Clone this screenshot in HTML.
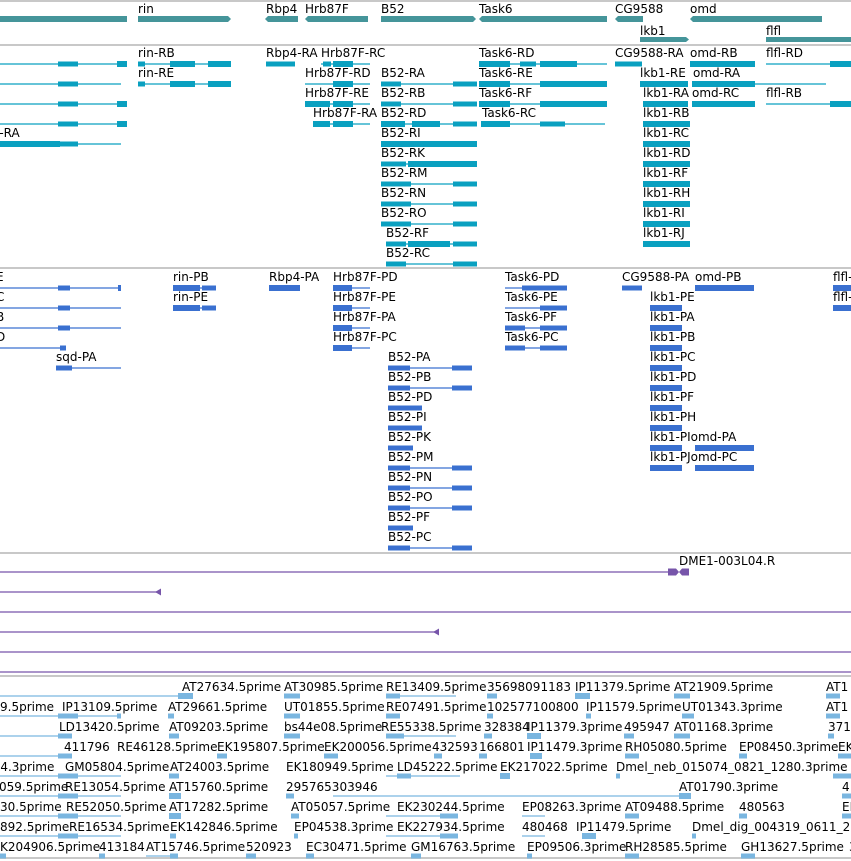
<!DOCTYPE html>
<html><head><meta charset="utf-8"><style>
html,body{margin:0;padding:0;background:#fff;width:851px;height:861px;overflow:hidden}
svg{display:block}
text{font-family:"DejaVu Sans","Liberation Sans",sans-serif;font-size:12px;fill:#000}
</style></head><body>
<svg width="851" height="861" viewBox="0 0 851 861" xmlns="http://www.w3.org/2000/svg">
<g stroke="#c8c8c8" stroke-width="2">
<path d="M0 1H851M0 45H851M0 268H851M0 553H851M0 676H851M0 858H851"/>
</g>
<!-- genes -->
<g fill="#45959a">
<rect x="0" y="16" width="127" height="6"/><rect x="138" y="16" width="90" height="6"/><polygon points="228,16 231,19 228,22"/>
<rect x="268" y="16" width="30" height="6"/><polygon points="268,16 265,19 268,22"/>
<rect x="308" y="16" width="60" height="6"/><polygon points="308,16 305,19 308,22"/>
<rect x="381" y="16" width="92" height="6"/><polygon points="473,16 476,19 473,22"/>
<rect x="482" y="16" width="125" height="6"/><polygon points="482,16 479,19 482,22"/>
<rect x="618" y="16" width="25" height="6"/><polygon points="618,16 615,19 618,22"/>
<rect x="693" y="16" width="129" height="6"/><polygon points="693,16 690,19 693,22"/>
<rect x="640" y="37" width="46" height="5"/><polygon points="686,37 689,39.5 686,42"/>
<rect x="766" y="37" width="85" height="5"/>
</g>
<text x="138" y="13">rin</text><text x="266" y="13">Rbp4</text><text x="305" y="13">Hrb87F</text><text x="381" y="13">B52</text><text x="479" y="13">Task6</text><text x="615" y="13">CG9588</text><text x="690" y="13">omd</text>
<text x="640" y="35">lkb1</text><text x="766" y="35">flfl</text>

<!-- section 1 -->
<g stroke="#0aa0c0" stroke-width="1.3" fill="none">
<path d="M0 64H127M138 64H231M266 64H295M321 64H370M479 64H607M615 64H642M690 64H755M766 64H851"/>
<path d="M0 84H121M138 84H231M305 84H370M381 84H477M479 84H607M640 84H688M692 84H826"/>
<path d="M0 104H127M305 104H370M381 104H477M479 104H607M643 104H688M692 104H755M766 104H851"/>
<path d="M0 124H127M313 124H370M381 124H477M481 124H605M643 124H690"/>
<path d="M0 144H121M381 144H477M643 144H690"/>
<path d="M381 164H477M643 164H690M381 184H477M643 184H690M381 204H477M643 204H690M381 224H477M643 224H690M386 244H477M643 244H690M386 264H477"/>
</g>
<g fill="#0aa0c0">
<rect x="58" y="61.5" width="20" height="5"/><rect x="117" y="61" width="10" height="6"/><rect x="170" y="61" width="25" height="6"/><rect x="208" y="61" width="23" height="6"/><rect x="138" y="61.5" width="7" height="5"/>
<rect x="266" y="61.5" width="29" height="5"/><rect x="333" y="61" width="20" height="6"/><rect x="323" y="61.5" width="8" height="5"/><rect x="479" y="61" width="31" height="6"/><rect x="540" y="61" width="37" height="6"/><rect x="520" y="61.5" width="16" height="5"/><rect x="615" y="61.5" width="27" height="5"/><rect x="690" y="61" width="65" height="6"/><rect x="830" y="61" width="21" height="6"/>
<rect x="58" y="81.5" width="20" height="5"/><rect x="170" y="81" width="25" height="6"/><rect x="208" y="81" width="23" height="6"/><rect x="138" y="81.5" width="7" height="5"/><rect x="333" y="81" width="20" height="6"/><rect x="381" y="81.5" width="20" height="5"/><rect x="453" y="81.5" width="24" height="5"/><rect x="479" y="81" width="31" height="6"/><rect x="540" y="81" width="67" height="6"/><rect x="640" y="81" width="48" height="6"/><rect x="692" y="81" width="63" height="6"/>
<rect x="58" y="101.5" width="20" height="5"/><rect x="117" y="101" width="10" height="6"/><rect x="305" y="101" width="25" height="6"/><rect x="333" y="101" width="20" height="6"/><rect x="381" y="101.5" width="20" height="5"/><rect x="453" y="101.5" width="24" height="5"/><rect x="479" y="101" width="31" height="6"/><rect x="540" y="101" width="67" height="6"/><rect x="643" y="101" width="45" height="6"/><rect x="692" y="101" width="63" height="6"/><rect x="830" y="101" width="21" height="6"/>
<rect x="58" y="121.5" width="20" height="5"/><rect x="117" y="121" width="10" height="6"/><rect x="313" y="121" width="17" height="6"/><rect x="333" y="121" width="20" height="6"/><rect x="381" y="121" width="24" height="6"/><rect x="412" y="121" width="28" height="6"/><rect x="453" y="121.5" width="24" height="5"/><rect x="481" y="121" width="29" height="6"/><rect x="540" y="121.5" width="25" height="5"/><rect x="643" y="121" width="47" height="6"/>
<rect x="0" y="141" width="60" height="6"/><rect x="60" y="141.5" width="18" height="5"/><rect x="381" y="141" width="96" height="6"/><rect x="643" y="141" width="47" height="6"/>
<rect x="381" y="161.5" width="25" height="5"/><rect x="408" y="161" width="69" height="6"/><rect x="643" y="161" width="47" height="6"/>
<rect x="381" y="181.5" width="30" height="5"/><rect x="453" y="181.5" width="24" height="5"/><rect x="643" y="181" width="47" height="6"/>
<rect x="381" y="201.5" width="30" height="5"/><rect x="453" y="201.5" width="24" height="5"/><rect x="643" y="201" width="47" height="6"/>
<rect x="381" y="221.5" width="30" height="5"/><rect x="453" y="221.5" width="24" height="5"/><rect x="643" y="221" width="47" height="6"/>
<rect x="386" y="241.5" width="20" height="5"/><rect x="408" y="241" width="42" height="6"/><rect x="453" y="241.5" width="24" height="5"/><rect x="643" y="241" width="47" height="6"/>
<rect x="386" y="261.5" width="20" height="5"/><rect x="453" y="261.5" width="24" height="5"/>
</g>
<text x="138" y="57">rin-RB</text><text x="266" y="57">Rbp4-RA</text><text x="321" y="57">Hrb87F-RC</text><text x="479" y="57">Task6-RD</text><text x="615" y="57">CG9588-RA</text><text x="690" y="57">omd-RB</text><text x="766" y="57">flfl-RD</text>
<text x="138" y="77">rin-RE</text><text x="305" y="77">Hrb87F-RD</text><text x="381" y="77">B52-RA</text><text x="479" y="77">Task6-RE</text><text x="640" y="77">lkb1-RE</text><text x="693" y="77">omd-RA</text>
<text x="305" y="97">Hrb87F-RE</text><text x="381" y="97">B52-RB</text><text x="479" y="97">Task6-RF</text><text x="643" y="97">lkb1-RA</text><text x="692" y="97">omd-RC</text><text x="766" y="97">flfl-RB</text>
<text x="313" y="117">Hrb87F-RA</text><text x="381" y="117">B52-RD</text><text x="482" y="117">Task6-RC</text><text x="643" y="117">lkb1-RB</text>
<text x="-4" y="137">l-RA</text><text x="381" y="137">B52-RI</text><text x="643" y="137">lkb1-RC</text>
<text x="381" y="157">B52-RK</text><text x="643" y="157">lkb1-RD</text>
<text x="381" y="177">B52-RM</text><text x="643" y="177">lkb1-RF</text>
<text x="381" y="197">B52-RN</text><text x="643" y="197">lkb1-RH</text>
<text x="381" y="217">B52-RO</text><text x="643" y="217">lkb1-RI</text>
<text x="386" y="237">B52-RF</text><text x="643" y="237">lkb1-RJ</text>
<text x="386" y="257">B52-RC</text>

<!-- section 2 -->
<g stroke="#3a70d0" stroke-width="1.3" fill="none">
<path d="M0 288H121M173 288H216M269 288H300M333 288H370M505 288H567M622 288H642M695 288H754M833 288H851"/>
<path d="M0 308H121M173 308H216M333 308H370M505 308H567M650 308H682M833 308H851"/>
<path d="M0 328H121M333 328H370M505 328H567M650 328H682"/>
<path d="M0 348H66M333 348H370M505 348H567M650 348H682"/>
<path d="M56 368H121M388 368H472M650 368H682"/>
<path d="M388 388H472M650 388H682M388 408H422M650 408H682M388 428H422M650 428H682M388 448H413M650 448H682M695 448H754M388 468H472M650 468H682M695 468H754M388 488H472M388 508H472M388 528H413M388 548H472"/>
</g>
<g fill="#3a70d0">
<rect x="58" y="285.5" width="12" height="5"/><rect x="118" y="285" width="3" height="6"/><rect x="173" y="285" width="27" height="6"/><rect x="202" y="285.5" width="14" height="5"/><rect x="269" y="285" width="31" height="6"/><rect x="333" y="285" width="19" height="6"/><rect x="522" y="285.5" width="45" height="5"/><rect x="622" y="285.5" width="20" height="5"/><rect x="695" y="285" width="59" height="6"/><rect x="833" y="285" width="18" height="6"/>
<rect x="58" y="305.5" width="12" height="5"/><rect x="173" y="305" width="27" height="6"/><rect x="202" y="305.5" width="14" height="5"/><rect x="333" y="305" width="19" height="6"/><rect x="540" y="305.5" width="27" height="5"/><rect x="650" y="305" width="32" height="6"/><rect x="833" y="305" width="18" height="6"/>
<rect x="58" y="325.5" width="12" height="5"/><rect x="333" y="325" width="19" height="6"/><rect x="505" y="325.5" width="20" height="5"/><rect x="540" y="325.5" width="27" height="5"/><rect x="650" y="325" width="32" height="6"/>
<rect x="60" y="345.5" width="6" height="5"/><rect x="333" y="345" width="19" height="6"/><rect x="505" y="345.5" width="20" height="5"/><rect x="540" y="345.5" width="27" height="5"/><rect x="650" y="345" width="32" height="6"/>
<rect x="56" y="365.5" width="16" height="5"/><rect x="388" y="365.5" width="22" height="5"/><rect x="452" y="365.5" width="20" height="5"/><rect x="650" y="365" width="32" height="6"/>
<rect x="388" y="385.5" width="22" height="5"/><rect x="452" y="385.5" width="20" height="5"/><rect x="650" y="385" width="32" height="6"/>
<rect x="388" y="405.5" width="34" height="5"/><rect x="650" y="405" width="32" height="6"/>
<rect x="388" y="425.5" width="34" height="5"/><rect x="650" y="425" width="32" height="6"/>
<rect x="388" y="445.5" width="25" height="5"/><rect x="650" y="445" width="32" height="6"/><rect x="695" y="445" width="59" height="6"/>
<rect x="388" y="465.5" width="22" height="5"/><rect x="452" y="465.5" width="20" height="5"/><rect x="650" y="465" width="32" height="6"/><rect x="695" y="465" width="59" height="6"/>
<rect x="388" y="485.5" width="22" height="5"/><rect x="452" y="485.5" width="20" height="5"/>
<rect x="388" y="505.5" width="22" height="5"/><rect x="452" y="505.5" width="20" height="5"/>
<rect x="388" y="525.5" width="25" height="5"/>
<rect x="388" y="545.5" width="22" height="5"/><rect x="452" y="545.5" width="20" height="5"/>
</g>
<text x="-4" y="281">E</text><text x="173" y="281">rin-PB</text><text x="269" y="281">Rbp4-PA</text><text x="333" y="281">Hrb87F-PD</text><text x="505" y="281">Task6-PD</text><text x="622" y="281">CG9588-PA</text><text x="695" y="281">omd-PB</text><text x="833" y="281">flfl-</text>
<text x="-4" y="301">C</text><text x="173" y="301">rin-PE</text><text x="333" y="301">Hrb87F-PE</text><text x="505" y="301">Task6-PE</text><text x="650" y="301">lkb1-PE</text><text x="833" y="301">flfl-</text>
<text x="-4" y="321">B</text><text x="333" y="321">Hrb87F-PA</text><text x="505" y="321">Task6-PF</text><text x="650" y="321">lkb1-PA</text>
<text x="-4" y="341">D</text><text x="333" y="341">Hrb87F-PC</text><text x="505" y="341">Task6-PC</text><text x="650" y="341">lkb1-PB</text>
<text x="56" y="361">sqd-PA</text><text x="388" y="361">B52-PA</text><text x="650" y="361">lkb1-PC</text>
<text x="388" y="381">B52-PB</text><text x="650" y="381">lkb1-PD</text>
<text x="388" y="401">B52-PD</text><text x="650" y="401">lkb1-PF</text>
<text x="388" y="421">B52-PI</text><text x="650" y="421">lkb1-PH</text>
<text x="388" y="441">B52-PK</text><text x="650" y="441">lkb1-PIomd-PA</text>
<text x="388" y="461">B52-PM</text><text x="650" y="461">lkb1-PJomd-PC</text>
<text x="388" y="481">B52-PN</text><text x="388" y="501">B52-PO</text><text x="388" y="521">B52-PF</text><text x="388" y="541">B52-PC</text>

<!-- section 3 -->
<g stroke="#7755aa" stroke-width="1.3" fill="none">
<path d="M0 572H668M0 592H158M0 612H851M0 632H436M0 652H851M0 672H851"/>
</g>
<g fill="#7755aa">
<rect x="668" y="568.5" width="8" height="7"/><polygon points="676,568.5 679,572 676,575.5"/><rect x="682" y="568.5" width="7" height="7"/><polygon points="682,568.5 679,572 682,575.5"/>
<polygon points="161,588.5 155,592 161,595.5"/><polygon points="439,628.5 433,632 439,635.5"/>
</g>
<text x="679" y="565">DME1-003L04.R</text>

<!-- section 4 -->
<g stroke="#7ab6e0" stroke-width="1.3" fill="none">
<path d="M0 696H190M386 696H456M0 716H121M0 736H70M386 736H456M0 756H70M0 776H121M386 776H460M0 796H121M333 796H680M0 816H121M386 816H456M522 816H545M0 836H121M386 836H456M522 836H545M146 856H178"/>
</g>
<g fill="#7ab6e0">
<rect x="178" y="693" width="15" height="6"/><rect x="284" y="693.5" width="16" height="5"/><rect x="386" y="693.5" width="14" height="5"/><rect x="487" y="693.5" width="10" height="5"/><rect x="575" y="693" width="15" height="6"/><rect x="674" y="693.5" width="16" height="5"/><rect x="826" y="693.5" width="14" height="5"/>
<rect x="58" y="713.5" width="20" height="5"/><rect x="117" y="713.5" width="4" height="5"/><rect x="168" y="713.5" width="6" height="5"/><rect x="284" y="713.5" width="16" height="5"/><rect x="386" y="713.5" width="14" height="5"/><rect x="487" y="713.5" width="6" height="5"/><rect x="586" y="713.5" width="5" height="5"/><rect x="682" y="713.5" width="12" height="5"/><rect x="826" y="713.5" width="14" height="5"/>
<rect x="58" y="733.5" width="14" height="5"/><rect x="169" y="733.5" width="10" height="5"/><rect x="284" y="733.5" width="16" height="5"/><rect x="386" y="733.5" width="18" height="5"/><rect x="484" y="733.5" width="8" height="5"/><rect x="527" y="733" width="14" height="6"/><rect x="624" y="733.5" width="10" height="5"/><rect x="674" y="733.5" width="16" height="5"/><rect x="828" y="733.5" width="6" height="5"/>
<rect x="58" y="753.5" width="14" height="5"/><rect x="217" y="753.5" width="10" height="5"/><rect x="324" y="753.5" width="14" height="5"/><rect x="434" y="753.5" width="8" height="5"/><rect x="479" y="753.5" width="8" height="5"/><rect x="530" y="753" width="12" height="6"/><rect x="625" y="753.5" width="14" height="5"/><rect x="739" y="753.5" width="8" height="5"/><rect x="838" y="753.5" width="13" height="5"/>
<rect x="58" y="773.5" width="20" height="5"/><rect x="169" y="773.5" width="10" height="5"/><rect x="397" y="773.5" width="14" height="5"/><rect x="500" y="773" width="10" height="6"/><rect x="616" y="773.5" width="4" height="5"/><rect x="833" y="773.5" width="18" height="5"/>
<rect x="58" y="793.5" width="20" height="5"/><rect x="169" y="793" width="12" height="6"/><rect x="286" y="793.5" width="8" height="5"/><rect x="679" y="793" width="12" height="6"/><rect x="842" y="793.5" width="9" height="5"/>
<rect x="58" y="813.5" width="20" height="5"/><rect x="169" y="813" width="12" height="6"/><rect x="291" y="813.5" width="8" height="5"/><rect x="440" y="813.5" width="18" height="5"/><rect x="625" y="813.5" width="14" height="5"/><rect x="739" y="813.5" width="8" height="5"/><rect x="842" y="813.5" width="9" height="5"/>
<rect x="58" y="833.5" width="20" height="5"/><rect x="170" y="833.5" width="6" height="5"/><rect x="294" y="833.5" width="4" height="5"/><rect x="440" y="833.5" width="18" height="5"/><rect x="582" y="833" width="14" height="6"/><rect x="692" y="833.5" width="4" height="5"/>
<rect x="0" y="853.5" width="6" height="5"/><rect x="99" y="853.5" width="6" height="5"/><rect x="170" y="853.5" width="8" height="5"/><rect x="246" y="853.5" width="10" height="5"/><rect x="306" y="853.5" width="8" height="5"/><rect x="411" y="853.5" width="10" height="5"/><rect x="527" y="853.5" width="5" height="5"/><rect x="625" y="853.5" width="14" height="5"/><rect x="741" y="853.5" width="14" height="5"/>
</g>
<text x="182" y="691">AT27634.5prime</text><text x="284" y="691">AT30985.5prime</text><text x="386" y="691">RE13409.5prime</text><text x="487" y="691">35698091183</text><text x="575" y="691">IP11379.5prime</text><text x="674" y="691">AT21909.5prime</text><text x="826" y="691">AT1</text>
<text x="0" y="711">9.5prime</text><text x="62" y="711">IP13109.5prime</text><text x="168" y="711">AT29661.5prime</text><text x="284" y="711">UT01855.5prime</text><text x="386" y="711">RE07491.5prime</text><text x="487" y="711">102577100800</text><text x="586" y="711">IP11579.5prime</text><text x="682" y="711">UT01343.3prime</text><text x="826" y="711">AT1</text>
<text x="59" y="731">LD13420.5prime</text><text x="169" y="731">AT09203.5prime</text><text x="284" y="731">bs44e08.5prime</text><text x="381" y="731">RE55338.5prime</text><text x="484" y="731">328384</text><text x="527" y="731">IP11379.3prime</text><text x="624" y="731">495947</text><text x="674" y="731">AT01168.3prime</text><text x="828" y="731">371</text>
<text x="64" y="751">411796</text><text x="117" y="751">RE46128.5prime</text><text x="217" y="751">EK195807.5prime</text><text x="324" y="751">EK200056.5prime</text><text x="432" y="751">432593</text><text x="479" y="751">166801</text><text x="527" y="751">IP11479.3prime</text><text x="625" y="751">RH05080.5prime</text><text x="739" y="751">EP08450.3prime</text><text x="838" y="751">EK</text>
<text x="-4" y="771">-4.3prime</text><text x="65" y="771">GM05804.5prime</text><text x="170" y="771">AT24003.5prime</text><text x="286" y="771">EK180949.5prime</text><text x="397" y="771">LD45222.5prime</text><text x="500" y="771">EK217022.5prime</text><text x="616" y="771">Dmel_neb_015074_0821_1280.3prime</text>
<text x="-1" y="791">059.5prime</text><text x="65" y="791">RE13054.5prime</text><text x="169" y="791">AT15760.5prime</text><text x="286" y="791">295765303946</text><text x="679" y="791">AT01790.3prime</text><text x="842" y="791">4</text>
<text x="0" y="811">30.5prime</text><text x="66" y="811">RE52050.5prime</text><text x="169" y="811">AT17282.5prime</text><text x="291" y="811">AT05057.5prime</text><text x="397" y="811">EK230244.5prime</text><text x="522" y="811">EP08263.3prime</text><text x="625" y="811">AT09488.5prime</text><text x="739" y="811">480563</text><text x="842" y="811">EK</text>
<text x="0" y="831">892.5prime</text><text x="69" y="831">RE16534.5prime</text><text x="170" y="831">EK142846.5prime</text><text x="294" y="831">EP04538.3prime</text><text x="397" y="831">EK227934.5prime</text><text x="522" y="831">480468</text><text x="576" y="831">IP11479.5prime</text><text x="692" y="831">Dmel_dig_004319_0611_2</text>
<text x="0" y="851">K204906.5prime</text><text x="99" y="851">413184</text><text x="146" y="851">AT15746.5prime</text><text x="246" y="851">520923</text><text x="306" y="851">EC30471.5prime</text><text x="411" y="851">GM16763.5prime</text><text x="527" y="851">EP09506.3prime</text><text x="625" y="851">RH28585.5prime</text><text x="741" y="851">GH13627.5prime</text><text x="849" y="851">3</text>
</svg>
</body></html>
